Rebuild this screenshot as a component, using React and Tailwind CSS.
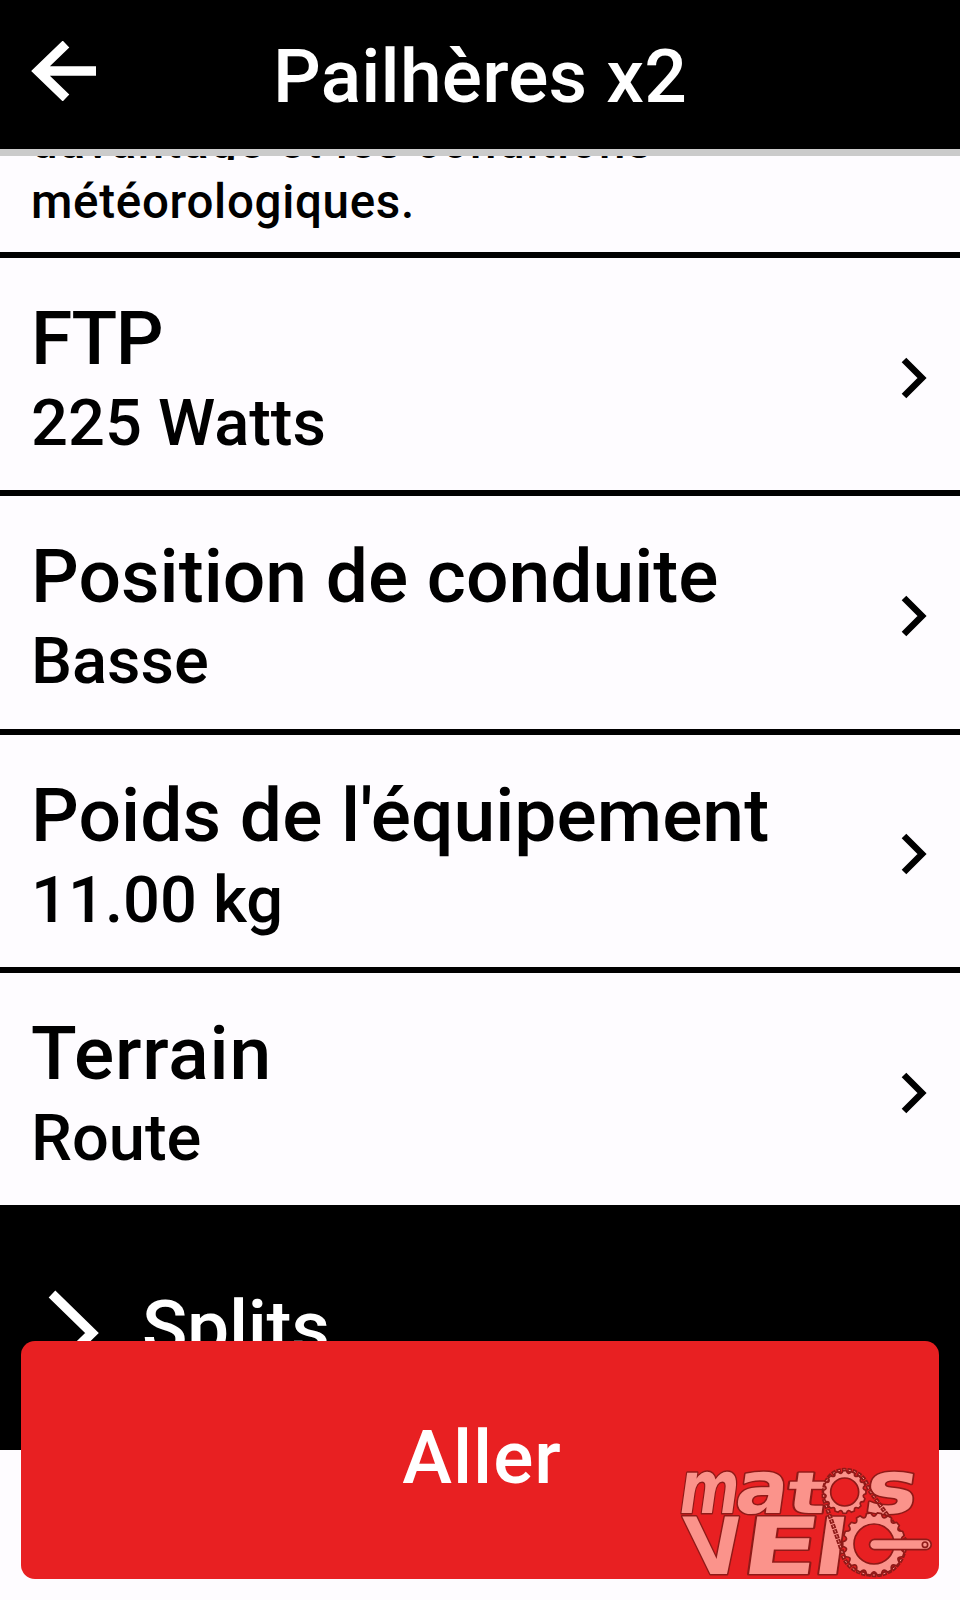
import React from 'react';

const settings = [
    { label: 'FTP', value: '225 Watts', tracking: 'tracking-[-1.5px]' },
    { label: 'Position de conduite', value: 'Basse', tracking: 'tracking-normal' },
    { label: "Poids de l'équipement", value: '11.00 kg', tracking: 'tracking-[0.05px]' },
    { label: 'Terrain', value: 'Route', tracking: 'tracking-[0.8px]' },
];

function SettingRow({ label, value, tracking }) {
    return (
        <button className="flex h-[238.3px] w-full shrink-0 items-center justify-between border-t-[6px] border-black pl-[31px] pr-[33px] pt-[11px] text-left">
            <span className="flex flex-col">
                <span className={`text-[75px] leading-[88px] ${tracking}`}>{label}</span>
                <span className="text-[65px] leading-[83px]">{value}</span>
            </span>
            <svg className="mb-[4px] h-[42px] w-[26px]" viewBox="0 0 26 42" fill="none" stroke="currentColor" strokeWidth="6.5">
                <path d="M3 3 L21 21 L3 39" />
            </svg>
        </button>
    );
}

// Outline of a chainring with rounded teeth
function ringPath(cx, cy, inner, outer, teeth) {
    const step = (Math.PI * 2) / teeth;
    const at = (r, a) => `${(cx + r * Math.cos(a)).toFixed(1)} ${(cy + r * Math.sin(a)).toFixed(1)}`;
    let d = `M${at(outer, -step * 0.2)}`;
    for (let i = 0; i < teeth; i++) {
        const a = i * step;
        d += ` L${at(outer, a + step * 0.2)} Q${at(inner, a + step * 0.5)} ${at(outer, a + step * 0.8)}`;
    }
    return d + 'Z';
}

function LogoLetter({ x, y, size, width, skew = -8, children }) {
    return (
        <text
            transform={`translate(${x} ${y}) skewX(${skew})`}
            fontSize={size}
            textLength={width}
            lengthAdjust="spacingAndGlyphs"
            stroke="#8f1a18"
            strokeWidth="9"
            paintOrder="stroke"
        >
            {children}
        </text>
    );
}

const chain = 'M545 330 C550 375 590 405 645 405 C695 405 738 365 736 300 L626 148 C618 112 590 90 554 90 C512 90 486 125 492 178 Z';

function MatosVelo() {
    return (
        <svg className="absolute left-[660px] top-[1440px] h-[160px] w-[300px]" viewBox="0 0 900 480">
            <g fill="#fb938b" strokeLinejoin="round" fontFamily="'DejaVu Sans', sans-serif" fontWeight="700">
                <LogoLetter x={50} y={218} size={221} width={180}>m</LogoLetter>
                <LogoLetter x={219} y={218} size={221} width={158}>a</LogoLetter>
                <LogoLetter x={374} y={218} size={172} width={120}>t</LogoLetter>
                <LogoLetter x={608} y={218} size={221} width={156}>s</LogoLetter>
                <LogoLetter x={90} y={402} size={237} width={172} skew={8}>V</LogoLetter>
                <LogoLetter x={236} y={402} size={237} width={232}>E</LogoLetter>
                <LogoLetter x={453} y={402} size={226} width={100}>l</LogoLetter>
            </g>
            <path d={chain} fill="none" stroke="#8f1a18" strokeWidth="13" strokeDasharray="13 3" />
            <path d={chain} fill="none" stroke="#fb938b" strokeWidth="3" strokeDasharray="6 10" strokeDashoffset="-3" />
            <g fill="#fb938b" stroke="#8f1a18" strokeWidth="5" strokeLinejoin="round">
                <path fillRule="evenodd" d={ringPath(554, 156, 50, 64, 16) + ' M596 156a42 42 0 1 0-84 0a42 42 0 1 0 84 0Z'} />
                <path fillRule="evenodd" d={ringPath(642, 312, 74, 94, 18) + ' M702 312a60 60 0 1 0-120 0a60 60 0 1 0 120 0Z'} />
                <path d="M644 298H798a15 15 0 0 1 0 31H644a15 15 0 0 1 0-31Z" />
                <circle cx="795" cy="314" r="8" />
            </g>
        </svg>
    );
}

export default function App() {
    return (
        <div className="relative flex h-[1600px] w-[960px] flex-col overflow-hidden bg-[#fefcff] font-['Roboto',sans-serif] font-medium text-black">
            <header className="grid h-[149px] shrink-0 grid-cols-[96px_1fr_96px] items-center bg-black text-white">
                <svg className="mb-[7px] ml-[31px] h-[60px] w-[65px]" viewBox="0 0 65 60" fill="none" stroke="currentColor" strokeWidth="9.5">
                    <path d="M35 3 L7 30 L35 57 M7 30 H65" />
                </svg>
                <h1 className="pt-[2px] text-center text-[75px] leading-[88px] tracking-[0.2px]">Pailhères x2</h1>
            </header>
            <div className="h-[7px] shrink-0 bg-[#cbcbcb]"></div>
            {/* the first line is mostly scrolled under the header */}
            <div className="flex h-[96px] shrink-0 flex-col overflow-hidden px-[31px] text-[47.5px] leading-[57px]">
                <p className="h-[4px] shrink-0 overflow-hidden">
                    <span className="-mt-[42px] block whitespace-nowrap tracking-[1.45px]">davantage et les conditions</span>
                </p>
                <p className="mt-[14px] tracking-[0.7px]">météorologiques.</p>
            </div>
            <main className="flex shrink-0 flex-col">
                {settings.map((item) => (
                    <SettingRow key={item.label} {...item} />
                ))}
            </main>
            <section className="flex h-[245px] shrink-0 items-start bg-black pl-[48px] pt-[78px] text-white">
                <svg className="mt-[7px] h-[86px] w-[52px]" viewBox="0 0 52 86" fill="none" stroke="currentColor" strokeWidth="9.5">
                    <path d="M4 4 L44 43 L4 82" />
                </svg>
                <h2 className="ml-[42px] text-[75px] leading-[88px] tracking-[-0.3px]">Splits</h2>
            </section>
            <button className="absolute left-[21px] top-[1341px] h-[238px] w-[918px] rounded-[14px] bg-[#e82022] pb-[5px] pl-[4px] text-[75px] tracking-[1px] text-white">
                Aller
            </button>
            <MatosVelo />
        </div>
    );
}
